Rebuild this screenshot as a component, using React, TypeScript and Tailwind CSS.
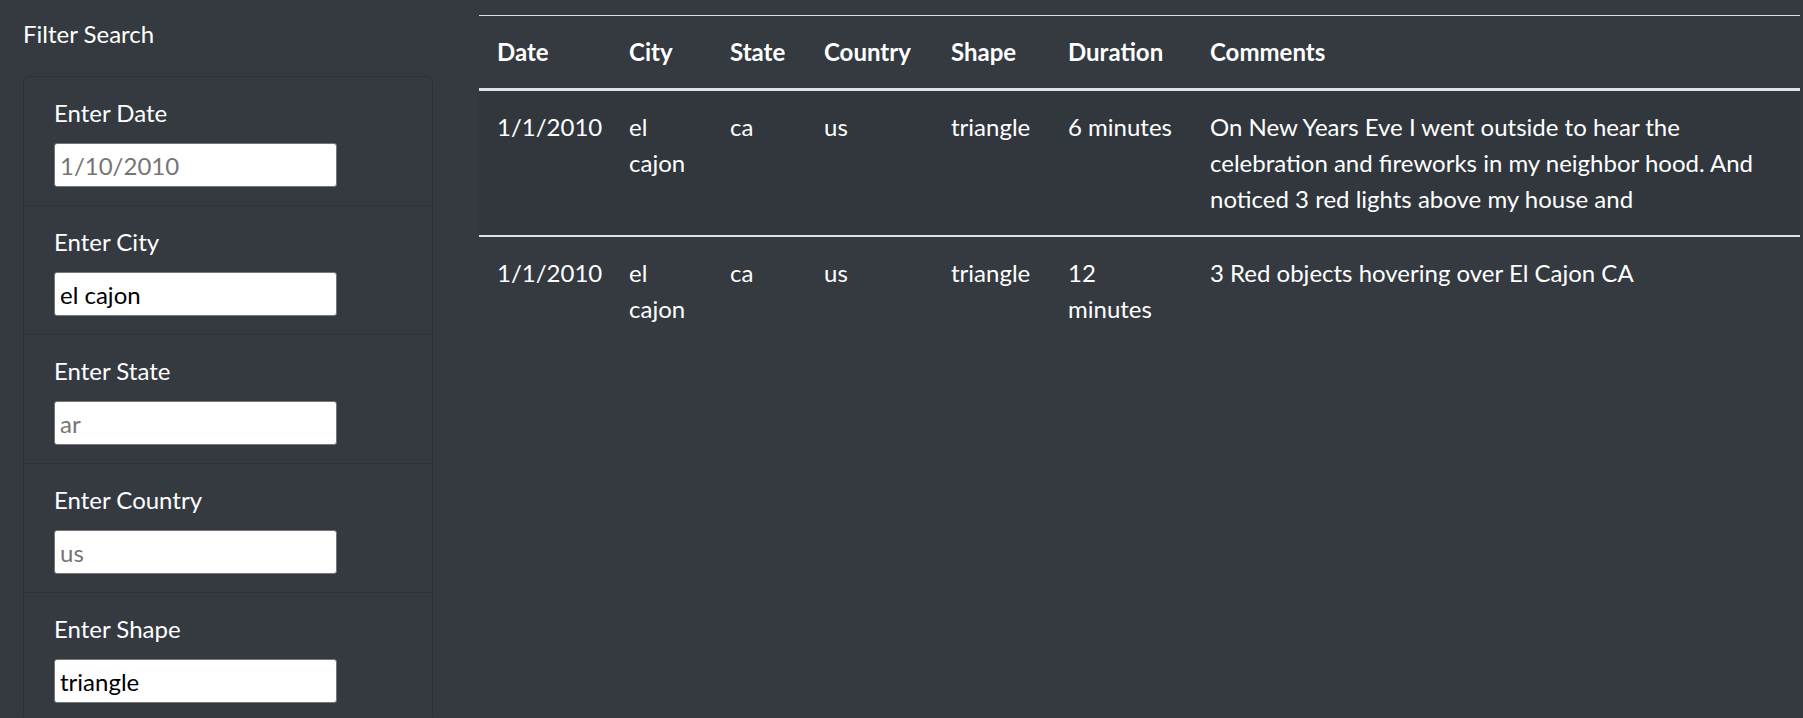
const FIELDS = [
  { label: "Enter Date", placeholder: "1/10/2010" },
  { label: "Enter City", value: "el cajon" },
  { label: "Enter State", placeholder: "ar" },
  { label: "Enter Country", placeholder: "us" },
  { label: "Enter Shape", value: "triangle" },
]

const COLS = [
  { name: "Date", w: "w-[132px]" },
  { name: "City", w: "w-[101px]" },
  { name: "State", w: "w-[94px]" },
  { name: "Country", w: "w-[127px]" },
  { name: "Shape", w: "w-[117px]" },
  { name: "Duration", w: "w-[142px]" },
  { name: "Comments", w: "" },
]

const ROWS = [
  ["1/1/2010", "el cajon", "ca", "us", "triangle", "6 minutes", "On New Years Eve I went outside to hear the celebration and fireworks in my neighbor hood. And noticed 3 red lights above my house and"],
  ["1/1/2010", "el cajon", "ca", "us", "triangle", "12 minutes", "3 Red objects hovering over El Cajon CA"],
]

export default function App() {
  return (
    <div className="min-h-screen bg-[#343a40] text-white text-[24px] leading-[36px] flex"
      style={{ fontFamily: "Lato, 'Open Sans', sans-serif" }}>
      {/* Sidebar */}
      <aside className="w-[479px] shrink-0 pl-[23px] pt-[16px]">
        <div className="mb-[24px]">Filter Search</div>
        <ul className="w-[410px] border-[1.5px] border-[rgba(0,0,0,0.125)] rounded-[6px]">
          {FIELDS.map((f, i) => (
            <li key={f.label}
              className={`px-[30px] py-[18px] ${i > 0 ? "border-t-[1.5px] border-[rgba(0,0,0,0.125)]" : ""}`}>
              <label className="block mb-[12px]">{f.label}</label>
              <input
                type="text"
                placeholder={f.placeholder}
                defaultValue={f.value}
                className="block w-[283px] h-[44px] bg-white text-black border-[1.5px] border-[#767676] rounded-[3px] px-[5px] text-[24px] placeholder:text-[#757575] outline-none"
              />
            </li>
          ))}
        </ul>
      </aside>

      {/* Table */}
      <main className="w-[1321px] shrink-0 pt-[15px]">
        <table className="w-full table-fixed border-collapse text-left">
          <thead>
            <tr>
              {COLS.map((c) => (
                <th key={c.name}
                  className={`${c.w} px-[18px] py-[18px] font-bold align-bottom border-t border-b-[3px] border-[#dee2e6]`}>
                  {c.name}
                </th>
              ))}
            </tr>
          </thead>
          <tbody>
            {ROWS.map((r, i) => (
              <tr key={i} className={i % 2 === 0 ? "bg-[#31373d]" : ""}>
                {r.map((cell, j) => (
                  <td key={j}
                    className={`px-[18px] py-[18px] align-top ${i > 0 ? "border-t-2 border-[#dee2e6]" : ""}`}>
                    {cell}
                  </td>
                ))}
              </tr>
            ))}
          </tbody>
        </table>
      </main>
    </div>
  )
}
